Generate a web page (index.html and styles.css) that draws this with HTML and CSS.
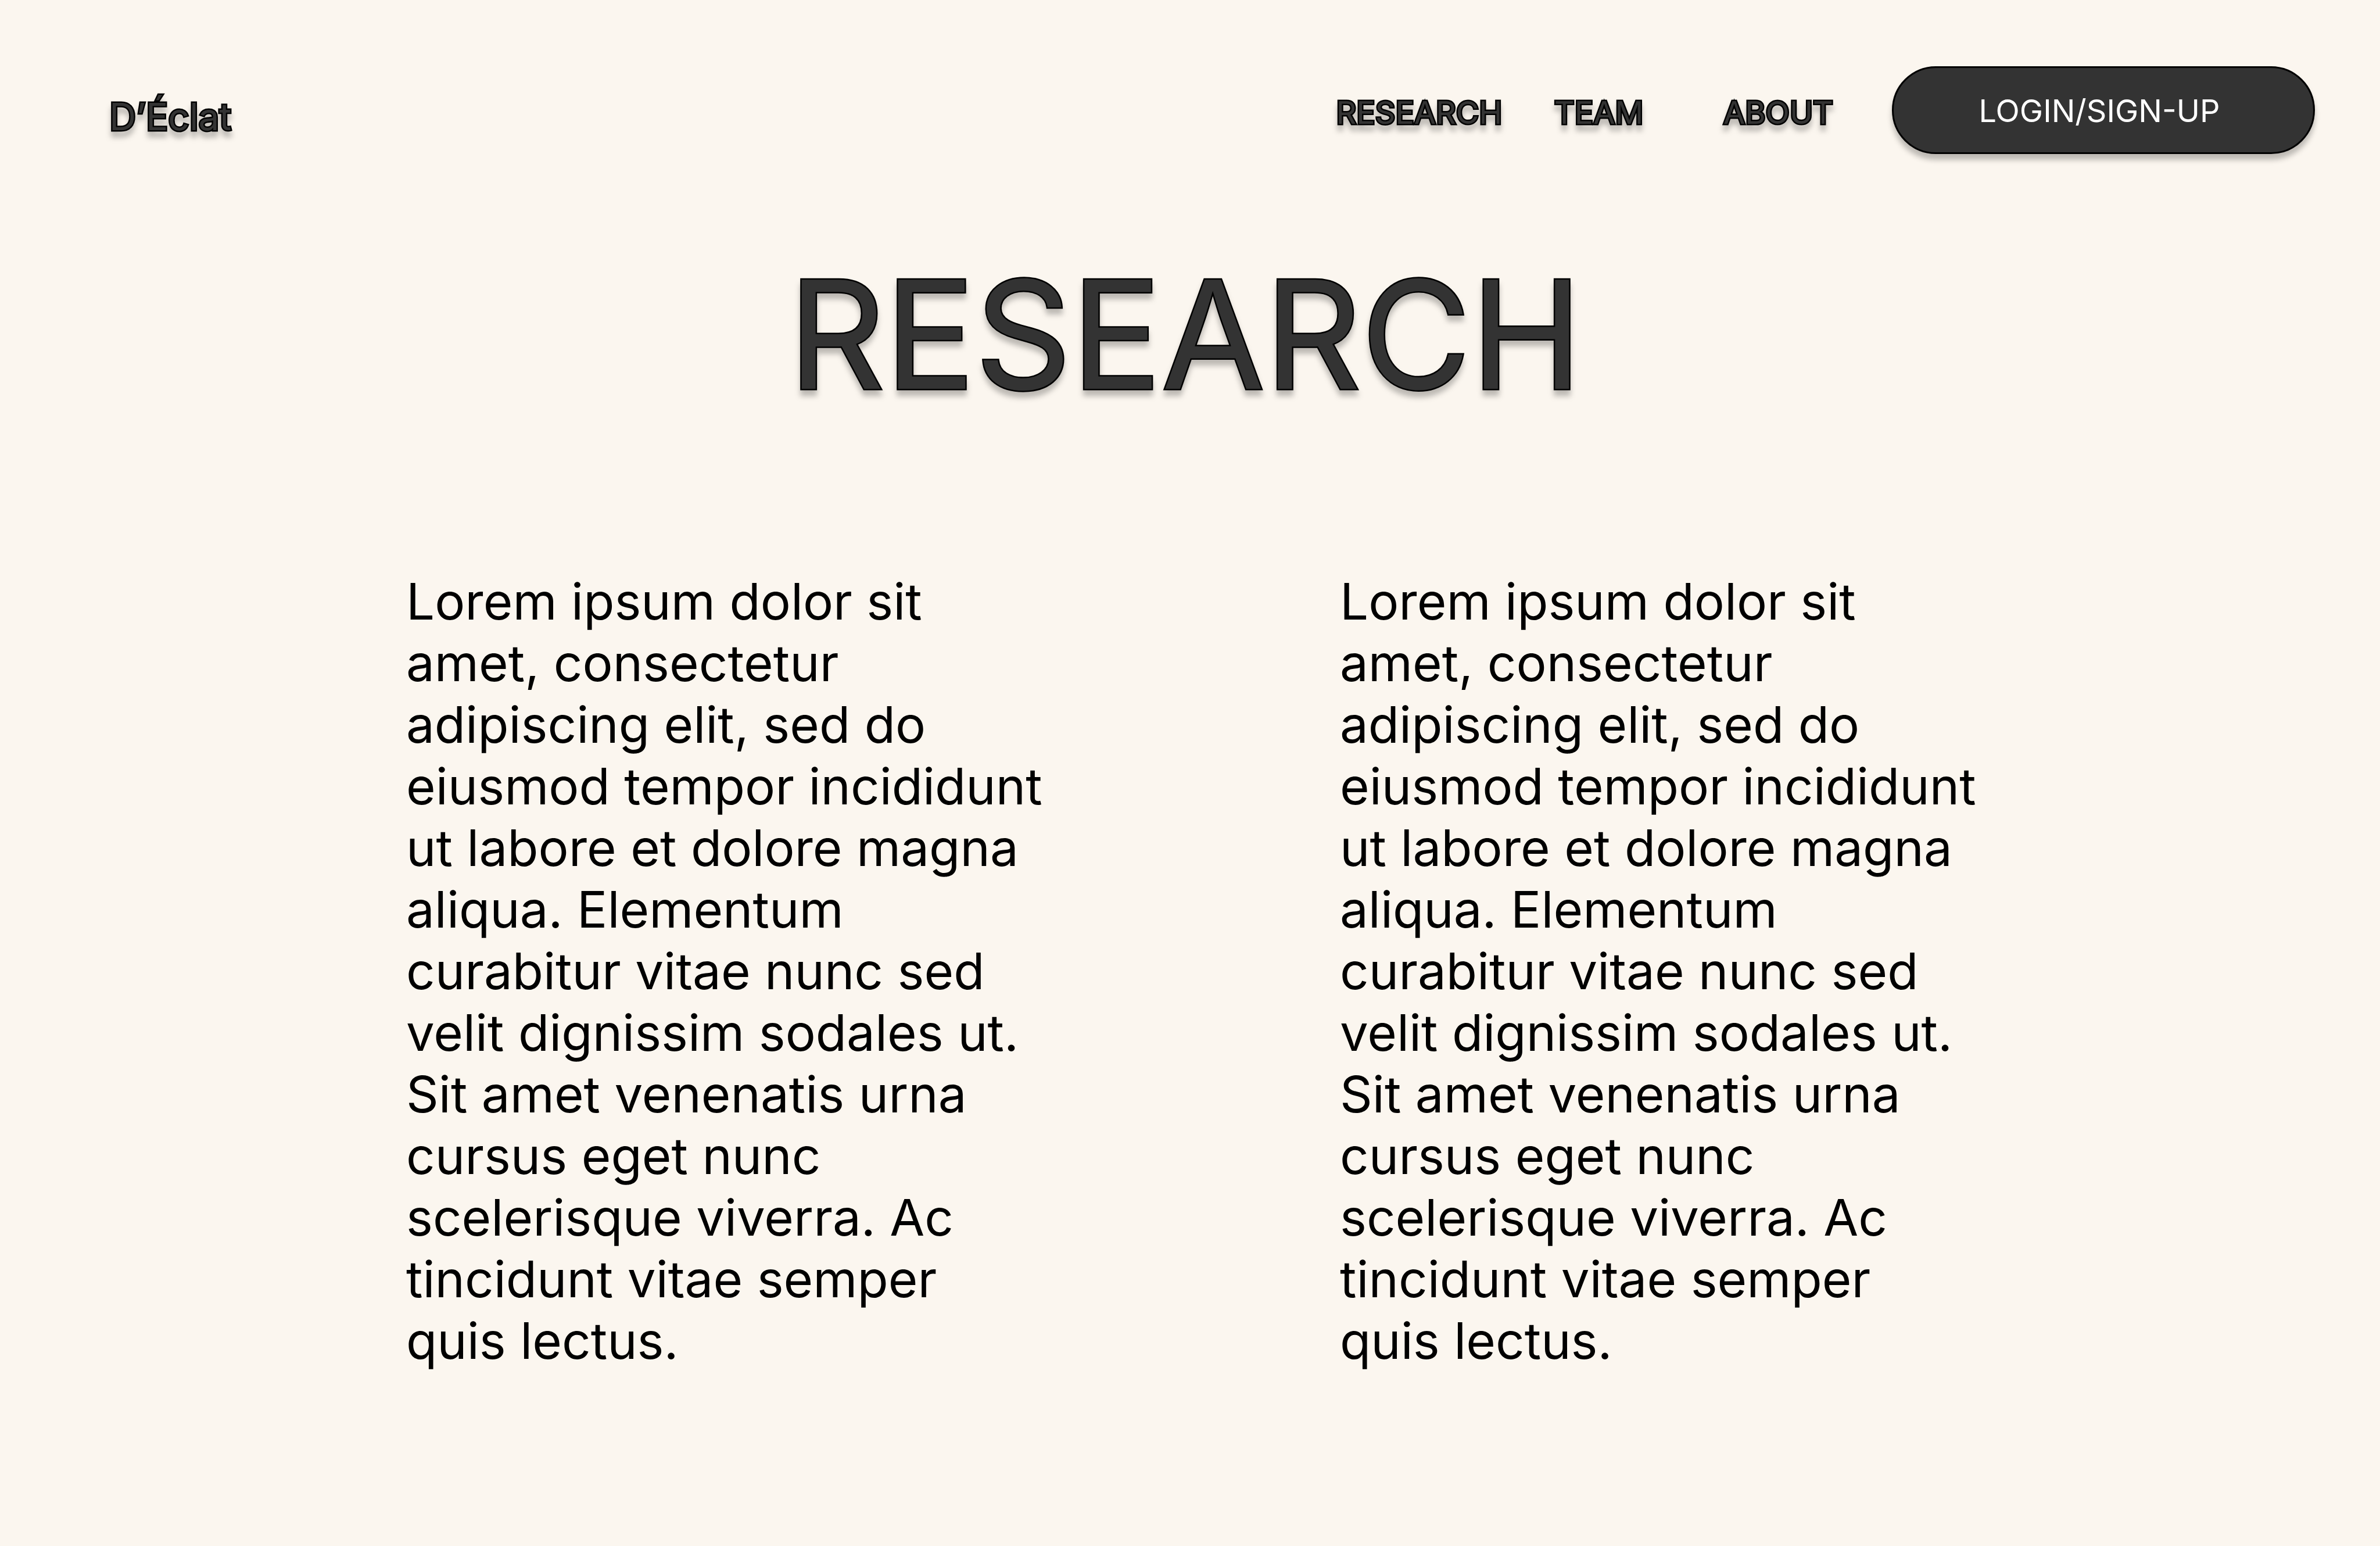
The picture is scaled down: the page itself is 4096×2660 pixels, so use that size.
FILE: index.html
```html
<!DOCTYPE html>
<html lang="en">
<head>
<meta charset="utf-8">
<title>D’Éclat – Research</title>
<link rel="stylesheet" href="styles.css">
</head>
<body>
<header class="site-header">
  <a class="logo outlined" href="#">D’Éclat</a>
  <nav class="site-nav">
    <a class="nav-link outlined" href="#research">RESEARCH</a>
    <a class="nav-link outlined" href="#team">TEAM</a>
    <a class="nav-link outlined" href="#about">ABOUT</a>
  </nav>
  <button class="login" type="button">LOGIN/SIGN-UP</button>
</header>
<main>
  <h1 class="title outlined" id="research">RESEARCH</h1>
  <div class="columns">
    <p class="copy">Lorem ipsum dolor sit amet, consectetur adipiscing elit, sed do eiusmod tempor incididunt ut labore et dolore magna aliqua. Elementum curabitur vitae nunc sed velit dignissim sodales ut. Sit amet venenatis urna cursus eget nunc scelerisque viverra. Ac tincidunt vitae semper quis lectus.</p>
    <p class="copy">Lorem ipsum dolor sit amet, consectetur adipiscing elit, sed do eiusmod tempor incididunt ut labore et dolore magna aliqua. Elementum curabitur vitae nunc sed velit dignissim sodales ut. Sit amet venenatis urna cursus eget nunc scelerisque viverra. Ac tincidunt vitae semper quis lectus.</p>
  </div>
</main>
</body>
</html>
```
FILE: styles.css
```css
* {
  box-sizing: border-box;
}

body {
  margin: 0;
  background: #fbf6ef;
  color: #000;
  font-family: Inter, "Liberation Sans", sans-serif;
  font-weight: 400;
}

.outlined {
  color: #333;
  text-decoration: none;
  -webkit-text-stroke: 5px #000;
  paint-order: stroke fill;
  filter: drop-shadow(0 10px 5px rgba(0, 0, 0, 0.25));
}

.site-header {
  display: flex;
  align-items: center;
  padding: 114px 112px 0 188px;
}

.logo {
  margin-right: auto;
  padding-top: 22px;
  font-size: 64px;
  line-height: 80px;
}

.site-nav {
  display: grid;
  grid-template-columns: repeat(3, 309px);
  margin-right: 41px;
  padding-top: 8px;
  text-align: center;
}

.nav-link {
  font-size: 54px;
  line-height: 66px;
}

.login {
  width: 728px;
  height: 151px;
  padding: 2px 14px 0 0;
  border: 3px solid #000;
  border-radius: 76px;
  background: #333;
  box-shadow: 0 10px 10px rgba(0, 0, 0, 0.25);
  color: #fff;
  font-family: inherit;
  font-size: 54px;
  line-height: 66px;
}

.title {
  margin: 153px 0 0;
  padding-right: 16px;
  font-size: 258px;
  font-weight: 400;
  line-height: 314px;
  text-align: center;
}

.columns {
  display: grid;
  grid-template-columns: 1fr 1fr;
  column-gap: 510px;
  padding: 250px 693px 0 699px;
}

.copy {
  margin: 0;
  font-size: 87px;
  line-height: 106px;
}
```
